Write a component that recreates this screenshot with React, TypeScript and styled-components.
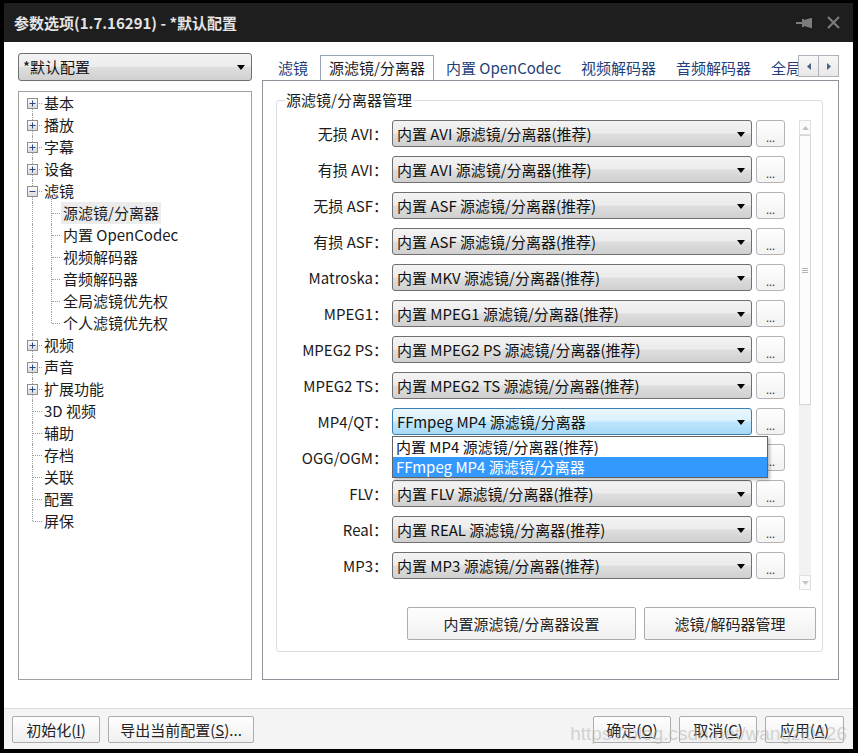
import styled, { createGlobalStyle, css } from "styled-components";

const GlobalStyle = createGlobalStyle`
  html, body {
    margin: 0;
    padding: 0;
    background: #000;
  }
  body {
    font-family: "Noto Sans CJK SC", "Noto Sans", sans-serif;
    font-size: 15px;
    color: #1b1b1b;
  }
  * {
    box-sizing: border-box;
  }
`;

const Frame = styled.div`
  width: 858px;
  height: 753px;
  background: #000;
  padding: 3px 5px 4px 4px;
  display: flex;
  flex-direction: column;
`;

const TitleBar = styled.div`
  height: 39px;
  flex: none;
  background: #1e1e1e;
  display: flex;
  align-items: center;
  padding: 0 13px 0 10px;
  color: #e4e4e4;
  font-weight: 700;
  font-size: 15px;
`;

const TitleText = styled.div`
  flex: 1;
  line-height: 20px;
`;

const TitleIcons = styled.div`
  display: flex;
  align-items: center;
  gap: 14px;
`;

const Body = styled.div`
  flex: 1;
  background: #fff;
  display: grid;
  grid-template-columns: 234px 577px;
  column-gap: 10px;
  padding: 11px 14px 28px 14px;
  min-height: 0;
`;

const LeftColumn = styled.div`
  display: flex;
  flex-direction: column;
  gap: 10px;
  min-height: 0;
`;

const RightColumn = styled.div`
  display: flex;
  flex-direction: column;
  min-height: 0;
`;

const Combo = styled.div<{ $width: number; $height?: number; $focus?: boolean }>`
  position: relative;
  width: ${(p) => p.$width}px;
  height: ${(p) => p.$height ?? 27}px;
  flex: none;
  border: 1px solid #707070;
  border-radius: 3px;
  background: linear-gradient(#f3f3f3 0%, #ececec 48%, #dedede 52%, #d0d0d0 100%);
  display: flex;
  align-items: center;
  padding: 0 24px 0 4px;
  line-height: 20px;
  white-space: nowrap;
  color: #111;

  &::after {
    content: "";
    position: absolute;
    right: 6px;
    top: 50%;
    margin-top: -2px;
    border-left: 4px solid transparent;
    border-right: 4px solid transparent;
    border-top: 5px solid #000;
  }

  ${(p) =>
    p.$focus &&
    css`
      border-color: #3c7fb1;
      background: linear-gradient(#eaf6fd 0%, #d9f0fc 48%, #bee6fd 52%, #a7d9f5 100%);
    `}
`;

const Tree = styled.div`
  flex: 1;
  border: 1px solid #a0a0a0;
  background: #fff;
`;

const TreeRow = styled.div<{ $level: number }>`
  position: relative;
  height: 22px;
  display: flex;
  align-items: center;
  padding-left: ${(p) => (p.$level === 0 ? 23 : 42)}px;
  line-height: 20px;
  white-space: nowrap;
`;

const VLine = styled.span<{ $left: number; $top: string; $bottom: string }>`
  position: absolute;
  left: ${(p) => p.$left}px;
  top: ${(p) => p.$top};
  bottom: ${(p) => p.$bottom};
  border-left: 1px dotted #a0a0a0;
`;

const HLine = styled.span<{ $left: number; $width: number }>`
  position: absolute;
  left: ${(p) => p.$left}px;
  width: ${(p) => p.$width}px;
  top: 11px;
  border-top: 1px dotted #a0a0a0;
`;

const Expander = styled.svg`
  position: absolute;
  left: 8px;
  top: 6px;
`;

const TreeLabel = styled.span<{ $selected?: boolean }>`
  padding: 0 2px;
  height: 22px;
  line-height: 21px;
  background: ${(p) => (p.$selected ? "#ececec" : "transparent")};
`;

const TabStrip = styled.div`
  position: relative;
  height: 27px;
  flex: none;
  display: flex;
  align-items: flex-end;
  padding-left: 6px;
  overflow: hidden;
  z-index: 1;
`;

const Tab = styled.div<{ $active?: boolean }>`
  flex: none;
  height: 24px;
  padding: 0 9px;
  border: 1px solid transparent;
  border-bottom: none;
  line-height: 22px;
  color: #22407a;
  white-space: nowrap;

  ${(p) =>
    p.$active &&
    css`
      height: 26px;
      margin: 0 2px -1px;
      padding: 0 8px;
      border-color: #9ba3b6;
      background: #fff;
      color: #1b1b1b;
      line-height: 24px;
    `}
`;

const TabScroller = styled.div`
  position: absolute;
  right: 0;
  top: 2px;
  display: flex;
  background: #fff;
`;

const TabArrow = styled.div`
  width: 21px;
  height: 22px;
  border: 1px solid #aeb2bb;
  background: linear-gradient(#f7f7f7, #e8e8e8);
  display: flex;
  align-items: center;
  justify-content: center;
  & + & {
    margin-left: -1px;
  }
`;

const Panel = styled.div`
  flex: 1;
  border: 1px solid #8e909a;
  padding: 19px 15px 27px 13px;
  display: flex;
  flex-direction: column;
`;

const GroupBox = styled.div`
  position: relative;
  border: 1px solid #d5dfe5;
  border-radius: 3px;
  padding: 19px 6px 11px 0;
`;

const GroupTitle = styled.div`
  position: absolute;
  left: 8px;
  top: -11px;
  padding: 0 1px;
  background: #fff;
  line-height: 20px;
  color: #1b1b1b;
`;

const RowsArea = styled.div`
  display: flex;
  height: 470px;
  margin-right: 4px;
`;

const RowsList = styled.div`
  display: flex;
  flex-direction: column;
  gap: 9px;
`;

const Row = styled.div`
  display: flex;
  align-items: center;
  gap: 4px;
`;

const RowLabel = styled.div`
  width: 111px;
  text-align: right;
  line-height: 20px;
  color: #1b1b1b;
  white-space: nowrap;
`;

const ComboHolder = styled.div`
  position: relative;
`;

const DropList = styled.div`
  position: absolute;
  left: 0;
  top: 28px;
  width: 376px;
  border: 1px solid #646464;
  background: #fff;
  box-shadow: 2px 2px 3px rgba(0, 0, 0, 0.25);
  z-index: 5;
`;

const DropItem = styled.div<{ $selected?: boolean }>`
  height: 20px;
  line-height: 20px;
  padding-left: 3px;
  white-space: nowrap;
  color: ${(p) => (p.$selected ? "#fff" : "#111")};
  background: ${(p) => (p.$selected ? "#3399ff" : "#fff")};
`;

const DotsButton = styled.div`
  width: 29px;
  height: 27px;
  border: 1px solid #b4b4b4;
  border-radius: 3px;
  background: linear-gradient(#fefefe, #f2f2f2);
  font-size: 11px;
  line-height: 11px;
  text-align: center;
  padding-top: 11px;
  color: #333;
`;

const ScrollBar = styled.div`
  margin-left: 14px;
  width: 12px;
  height: 470px;
  display: flex;
  flex-direction: column;
  background: #f2f2f2;
`;

const ScrollButton = styled.div`
  height: 15px;
  border: 1px solid #e0e0e0;
  background: #fbfbfb;
  display: flex;
  align-items: center;
  justify-content: center;
`;

const ScrollThumb = styled.div`
  height: 270px;
  border: 1px solid #d6d6d6;
  background: #fcfcfc;
  display: flex;
  align-items: center;
  justify-content: center;
`;

const ScrollTrack = styled.div`
  flex: 1;
`;

const Grip = styled.div`
  width: 6px;
  height: 5px;
  border-top: 1px solid #b5b5b5;
  border-bottom: 1px solid #b5b5b5;
  position: relative;
  &::after {
    content: "";
    position: absolute;
    left: 0;
    right: 0;
    top: 1px;
    border-top: 1px solid #b5b5b5;
  }
`;

const ButtonBar = styled.div`
  display: flex;
  justify-content: flex-end;
  gap: 8px;
  margin-top: 17px;
`;

const PushButton = styled.div<{ $width: number; $height?: number }>`
  width: ${(p) => p.$width}px;
  height: ${(p) => p.$height ?? 33}px;
  border: 1px solid #adadad;
  border-radius: 2px;
  background: linear-gradient(#fefefe, #f0f0f0);
  display: flex;
  align-items: center;
  justify-content: center;
  line-height: 20px;
  color: #222;
  white-space: nowrap;
`;

const Footer = styled.div`
  position: relative;
  height: 41px;
  flex: none;
  background: #f4f4f4;
  border-top: 1px solid #dcdcdc;
  display: flex;
  gap: 8px;
  padding: 7px 9px 0 8px;
`;

const FooterRight = styled.div`
  margin-left: auto;
  display: flex;
  gap: 8px;
`;

const Watermark = styled.div`
  position: absolute;
  right: 6px;
  bottom: 4px;
  font-family: "Liberation Sans", Arial, sans-serif;
  font-size: 19px;
  color: rgba(175, 175, 175, 0.5);
  pointer-events: none;
  white-space: nowrap;
`;

type Node = {
  label: string;
  level: 0 | 1;
  expander?: "+" | "-";
  selected?: boolean;
  first?: boolean;
  last?: boolean;
};

const tree: Node[] = [
  { label: "基本", level: 0, expander: "+", first: true },
  { label: "播放", level: 0, expander: "+" },
  { label: "字幕", level: 0, expander: "+" },
  { label: "设备", level: 0, expander: "+" },
  { label: "滤镜", level: 0, expander: "-" },
  { label: "源滤镜/分离器", level: 1, selected: true, first: true },
  { label: "内置 OpenCodec", level: 1 },
  { label: "视频解码器", level: 1 },
  { label: "音频解码器", level: 1 },
  { label: "全局滤镜优先权", level: 1 },
  { label: "个人滤镜优先权", level: 1, last: true },
  { label: "视频", level: 0, expander: "+" },
  { label: "声音", level: 0, expander: "+" },
  { label: "扩展功能", level: 0, expander: "+" },
  { label: "3D 视频", level: 0 },
  { label: "辅助", level: 0 },
  { label: "存档", level: 0 },
  { label: "关联", level: 0 },
  { label: "配置", level: 0 },
  { label: "屏保", level: 0, last: true },
];

const rows = [
  { label: "无损 AVI：", value: "内置 AVI 源滤镜/分离器(推荐)" },
  { label: "有损 AVI：", value: "内置 AVI 源滤镜/分离器(推荐)" },
  { label: "无损 ASF：", value: "内置 ASF 源滤镜/分离器(推荐)" },
  { label: "有损 ASF：", value: "内置 ASF 源滤镜/分离器(推荐)" },
  { label: "Matroska：", value: "内置 MKV 源滤镜/分离器(推荐)" },
  { label: "MPEG1：", value: "内置 MPEG1 源滤镜/分离器(推荐)" },
  { label: "MPEG2 PS：", value: "内置 MPEG2 PS 源滤镜/分离器(推荐)" },
  { label: "MPEG2 TS：", value: "内置 MPEG2 TS 源滤镜/分离器(推荐)" },
  { label: "MP4/QT：", value: "FFmpeg MP4 源滤镜/分离器", open: true },
  { label: "OGG/OGM：", value: "内置 OGG 源滤镜/分离器(推荐)" },
  { label: "FLV：", value: "内置 FLV 源滤镜/分离器(推荐)" },
  { label: "Real：", value: "内置 REAL 源滤镜/分离器(推荐)" },
  { label: "MP3：", value: "内置 MP3 源滤镜/分离器(推荐)" },
];

const tabs = ["滤镜", "源滤镜/分离器", "内置 OpenCodec", "视频解码器", "音频解码器", "全局滤镜优先权", "个人滤镜优先权"];

const ExpanderBox = ({ open }: { open: boolean }) => (
  <Expander width="11" height="11" viewBox="0 0 11 11">
    <defs>
      <linearGradient id="exg" x1="0" y1="0" x2="0" y2="1">
        <stop offset="0" stopColor="#ffffff" />
        <stop offset="1" stopColor="#d8d8d8" />
      </linearGradient>
    </defs>
    <rect x="0.5" y="0.5" width="10" height="10" fill="url(#exg)" stroke="#8f8f8f" />
    <line x1="2.5" y1="5.5" x2="8.5" y2="5.5" stroke="#2a4a86" />
    {!open && <line x1="5.5" y1="2.5" x2="5.5" y2="8.5" stroke="#2a4a86" />}
  </Expander>
);

const TreeItem = ({ node }: { node: Node }) => {
  const rootTop = node.level === 0 && node.first ? "11px" : "0";
  const rootBottom = node.level === 0 && node.last ? "11px" : "0";
  return (
    <TreeRow $level={node.level}>
      <VLine $left={13} $top={rootTop} $bottom={rootBottom} />
      {node.level === 1 && (
        <>
          <VLine $left={32} $top={node.first ? "-5px" : "0"} $bottom={node.last ? "11px" : "0"} />
          <HLine $left={33} $width={8} />
        </>
      )}
      {node.level === 0 && <HLine $left={14} $width={9} />}
      {node.expander && <ExpanderBox open={node.expander === "-"} />}
      <TreeLabel $selected={node.selected}>{node.label}</TreeLabel>
    </TreeRow>
  );
};

const TinyTriangle = ({ dir, color }: { dir: "up" | "down" | "left" | "right"; color: string }) => {
  const pts = {
    up: "0,4 7,4 3.5,0",
    down: "0,0 7,0 3.5,4",
    left: "4,0 4,7 0,3.5",
    right: "0,0 0,7 4,3.5",
  }[dir];
  const horiz = dir === "up" || dir === "down";
  return (
    <svg width={horiz ? 7 : 4} height={horiz ? 4 : 7} viewBox={horiz ? "0 0 7 4" : "0 0 4 7"}>
      <polygon points={pts} fill={color} />
    </svg>
  );
};

export default function App() {
  return (
    <>
      <GlobalStyle />
      <Frame>
        <TitleBar>
          <TitleText>参数选项(1.7.16291) - *默认配置</TitleText>
          <TitleIcons>
            <svg width="17" height="12" viewBox="0 0 17 12">
              <rect x="0" y="5" width="6" height="2" fill="#7c7c7c" />
              <path d="M6 2 L8 2 L8 3 L15 1 L16 1 L16 11 L15 11 L8 9 L8 10 L6 10 Z" fill="#7c7c7c" />
            </svg>
            <svg width="13" height="13" viewBox="0 0 13 13">
              <path d="M1 1 L12 12 M12 1 L1 12" stroke="#7c7c7c" strokeWidth="2.2" />
            </svg>
          </TitleIcons>
        </TitleBar>

        <Body>
          <LeftColumn>
            <Combo $width={234} $height={28}>
              *默认配置
            </Combo>
            <Tree>
              {tree.map((node, i) => (
                <TreeItem key={i} node={node} />
              ))}
            </Tree>
          </LeftColumn>

          <RightColumn>
            <TabStrip>
              {tabs.map((t, i) => (
                <Tab key={t} $active={i === 1}>
                  {t}
                </Tab>
              ))}
              <TabScroller>
                <TabArrow>
                  <TinyTriangle dir="left" color="#4a5f88" />
                </TabArrow>
                <TabArrow>
                  <TinyTriangle dir="right" color="#4a5f88" />
                </TabArrow>
              </TabScroller>
            </TabStrip>

            <Panel>
              <GroupBox>
                <GroupTitle>源滤镜/分离器管理</GroupTitle>
                <RowsArea>
                  <RowsList>
                    {rows.map((r) => (
                      <Row key={r.label}>
                        <RowLabel>{r.label}</RowLabel>
                        <ComboHolder>
                          <Combo $width={360} $focus={r.open}>
                            {r.value}
                          </Combo>
                          {r.open && (
                            <DropList>
                              <DropItem>内置 MP4 源滤镜/分离器(推荐)</DropItem>
                              <DropItem $selected>FFmpeg MP4 源滤镜/分离器</DropItem>
                            </DropList>
                          )}
                        </ComboHolder>
                        <DotsButton>...</DotsButton>
                      </Row>
                    ))}
                  </RowsList>
                  <ScrollBar>
                    <ScrollButton>
                      <TinyTriangle dir="up" color="#c4c4c4" />
                    </ScrollButton>
                    <ScrollThumb>
                      <Grip />
                    </ScrollThumb>
                    <ScrollTrack />
                    <ScrollButton>
                      <TinyTriangle dir="down" color="#c4c4c4" />
                    </ScrollButton>
                  </ScrollBar>
                </RowsArea>
                <ButtonBar>
                  <PushButton $width={229}>内置源滤镜/分离器设置</PushButton>
                  <PushButton $width={172}>滤镜/解码器管理</PushButton>
                </ButtonBar>
              </GroupBox>
            </Panel>
          </RightColumn>
        </Body>

        <Footer>
          <PushButton $width={88} $height={27}>
            初始化(<u>I</u>)
          </PushButton>
          <PushButton $width={146} $height={27}>
            导出当前配置(<u>S</u>)...
          </PushButton>
          <FooterRight>
            <PushButton $width={78} $height={27}>
              确定(<u>O</u>)
            </PushButton>
            <PushButton $width={78} $height={27}>
              取消(<u>C</u>)
            </PushButton>
            <PushButton $width={79} $height={27}>
              应用(<u>A</u>)
            </PushButton>
          </FooterRight>
          <Watermark>https://blog.csdn.net/wangzi0426</Watermark>
        </Footer>
      </Frame>
    </>
  );
}
